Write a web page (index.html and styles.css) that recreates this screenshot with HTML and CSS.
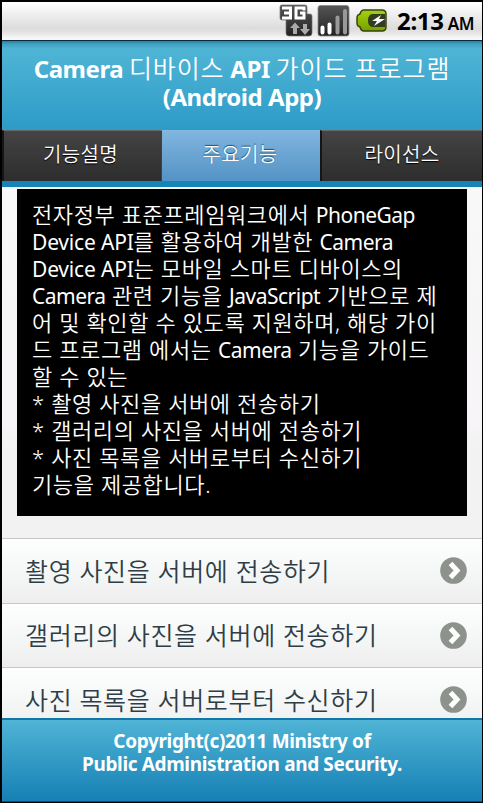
FILE: index.html
```html
<!DOCTYPE html>
<html lang="ko">
<head>
<meta charset="utf-8">
<title>Camera 디바이스 API 가이드 프로그램</title>
<link rel="stylesheet" href="styles.css">
</head>
<body>
<div class="screen">
  <div class="status">
    <svg class="status-icons" width="110" height="36" viewBox="0 0 110 36">
      <defs>
        <linearGradient id="dark" x1="0" y1="0" x2="0" y2="1"><stop offset="0" stop-color="#555"/><stop offset="1" stop-color="#222"/></linearGradient>
        <linearGradient id="green" x1="0" y1="0" x2="0" y2="1"><stop offset="0" stop-color="#a5d20a"/><stop offset="1" stop-color="#75a000"/></linearGradient>
      </defs>
      <path d="M3 3h23q2 0 2 2v7h3q2 0 2 2v17q0 3-3 3H10q-3 0-3-3V18H3q-2 0-2-2V5q0-2 2-2z" fill="url(#dark)" stroke="#777" stroke-width=".7"/>
      <path d="M3 6h8.500v10H3M5 11h6M25 8.500V6h-8v10h8v-5h-4" fill="none" stroke="#fff" stroke-width="3"/>
      <path d="M16 20.500l5 5.500h-3v6h-4v-6h-3zM26 33l-5-6h3v-5h4v5h3z" fill="#aaa"/>
      <rect x="39" y="3.500" width="31" height="30.500" rx="2.500" fill="url(#dark)" stroke="#888" stroke-width=".8"/>
      <path d="M43.500 25.500v5M50.500 22.500v8" stroke="#fff" stroke-width="4" stroke-linecap="round"/>
      <path d="M58.500 15.500v15M66 9v21.500" stroke="#999" stroke-width="4" stroke-linecap="round"/>
      <path d="M85 8h18q4 0 4 4v13q0 4-4 4H85q-3 0-4-4l-2-1q-1-1-1-3v-5q0-2 1-3l2-1q1-4 4-4z" fill="url(#green)" stroke="#39420c" stroke-width="1.500"/>
      <path d="M93 12h13v13H93q-4-1-4-6.500T93 12z" fill="#343b21"/>
      <path d="M102 13l-9 6h5l-3 5 11-7h-6z" fill="#fff"/>
    </svg>
    <div class="clock"><b class="time">2:13</b><span class="ampm">AM</span></div>
  </div>
  <header class="header">
    <div>Camera <span class="thin">디바이스</span> API <span class="thin">가이드 프로그램</span></div>
    <div>(Android App)</div>
  </header>
  <nav class="tabs">
    <div class="tab">기능설명</div>
    <div class="tab active">주요기능</div>
    <div class="tab">라이선스</div>
  </nav>
  <main class="page">
    <div class="intro">
      <div>전자정부 표준프레임워크에서 <span class="latin">PhoneGap</span></div>
      <div><span class="latin device">Device API</span>를 활용하여 개발한 <span class="latin">Camera</span></div>
      <div><span class="latin device">Device API</span>는 모바일 스마트 디바이스의</div>
      <div><span class="latin">Camera</span> 관련 기능을 <span class="latin">JavaScript</span> 기반으로 제</div>
      <div>어 및 확인할 수 있도록 지원하며, 해당 가이</div>
      <div>드 프로그램 에서는 <span class="latin">Camera</span> 기능을 가이드</div>
      <div>할 수 있는</div>
      <div>* 촬영 사진을 서버에 전송하기</div>
      <div>* 갤러리의 사진을 서버에 전송하기</div>
      <div>* 사진 목록을 서버로부터 수신하기</div>
      <div>기능을 제공합니다.</div>
    </div>
    <div class="list">
      <div class="row"><span>촬영 사진을 서버에 전송하기</span><svg class="arrow" width="27" height="27" viewBox="0 0 27 27"><circle cx="13.500" cy="13.500" r="13.300"/><path d="M10.500 6.500l6.500 7-6.500 7"/></svg></div>
      <div class="row"><span>갤러리의 사진을 서버에 전송하기</span><svg class="arrow" width="27" height="27" viewBox="0 0 27 27"><circle cx="13.500" cy="13.500" r="13.300"/><path d="M10.500 6.500l6.500 7-6.500 7"/></svg></div>
      <div class="row"><span>사진 목록을 서버로부터 수신하기</span><svg class="arrow" width="27" height="27" viewBox="0 0 27 27"><circle cx="13.500" cy="13.500" r="13.300"/><path d="M10.500 6.500l6.500 7-6.500 7"/></svg></div>
    </div>
  </main>
  <footer class="footer">
    <div>Copyright(c)2011 Ministry of</div>
    <div>Public Administration and Security.</div>
  </footer>
</div>
</body>
</html>
```
FILE: styles.css
```css
* { box-sizing: border-box; }
body {
  margin: 0;
  background: #000;
  font-family: "Noto Sans", "Noto Sans CJK KR", sans-serif;
  overflow: hidden;
}
.screen {
  display: flex;
  flex-direction: column;
  width: 483px;
  height: 803px;
  border: solid #000;
  border-width: 2px 1px 1px 2px;
  white-space: nowrap;
}
.status {
  display: flex;
  flex: none;
  height: 39px;
  padding-left: 277px;
  background: linear-gradient(#fff 0, #f7f7f7 15%, #dcdcdc 70%, #e4e4e4 80%, #f8f8f8 96%);
  border-bottom: 1px solid #062a40;
}
.clock {
  display: flex;
  align-items: baseline;
  gap: 4px;
  padding-left: 8px;
  line-height: 38px;
  color: #000;
}
.time { font-size: 24px; letter-spacing: -0.3px; }
.ampm { font-size: 17px; font-weight: 600; letter-spacing: -0.4px; }
.header {
  flex: none;
  height: 89px;
  padding-top: 14px;
  background: linear-gradient(#2b7f9e 0, #41a0bd 3px, #4fb5d5 8px, #2d9ac7 100%);
  color: #fff;
  font-size: 24px;
  font-weight: 700;
  letter-spacing: -0.45px;
  line-height: 28px;
  text-align: center;
}
.thin { font-size: 25px; font-weight: 350; line-height: 1; letter-spacing: 0.9px; }
.tabs {
  display: flex;
  flex: none;
  height: 57px;
  border-bottom: 6px solid #1784b8;
}
.tab {
  flex: 1;
  border-left: 2px solid #151515;
  border-top: 1px solid #686868;
  background: linear-gradient(#444, #2d2d2d);
  color: #fff;
  font-size: 20px;
  font-weight: 350;
  letter-spacing: 0.4px;
  line-height: 48px;
  text-align: center;
  text-shadow: 0 1px 1px #000;
}
.tab:first-child { padding-right: 4px; }
.tab:last-child { flex: 0 0 162px; }
.active {
  flex: 0 0 159px;
  border-left: 1px solid #145072;
  border-top-color: #83b9df;
  background: linear-gradient(#81b5df, #5393c5);
  padding-right: 2px;
  text-shadow: 0 -1px 1px #145072;
}
.page {
  flex: 1;
  min-height: 0;
  overflow: hidden;
  padding-top: 2px;
  background: linear-gradient(#f8f8f8, #f7f5f7 45%, #f1f2f1 50%, #f2f2f2);
}
.intro {
  width: 450px;
  height: 327px;
  margin: 0 0 22px 15px;
  padding: 12px 15px;
  background: #000;
  color: #fff;
  font-size: 22px;
  font-weight: 350;
  line-height: 27px;
  letter-spacing: 0.6px;
  word-spacing: 0.1px;
}
.latin { font-size: 21px; line-height: 1; letter-spacing: -0.5px; font-weight: 400; }
.device { letter-spacing: -0.2px; }
.row {
  display: flex;
  align-items: center;
  justify-content: space-between;
  height: 64.5px;
  padding: 0 15px 0 23px;
  border-top: 1px solid #c7c7c7;
  background: linear-gradient(#fdfffe, #eeeeef);
  color: #2f3e46;
  font-size: 25px;
  font-weight: 350;
  letter-spacing: 0.65px;
}
.row span { padding-bottom: 2px; }
.arrow circle { fill: #8d928d; }
.arrow path { fill: none; stroke: #fff; stroke-width: 5; }
.footer {
  flex: none;
  height: 84px;
  padding-top: 10px;
  border-top: 2px solid #1077a9;
  border-bottom: 1px solid #095078;
  background: linear-gradient(#4fb4d5, #1680b5);
  color: #fff;
  font-size: 19px;
  font-weight: 700;
  letter-spacing: -0.36px;
  line-height: 23px;
  text-align: center;
}
```
